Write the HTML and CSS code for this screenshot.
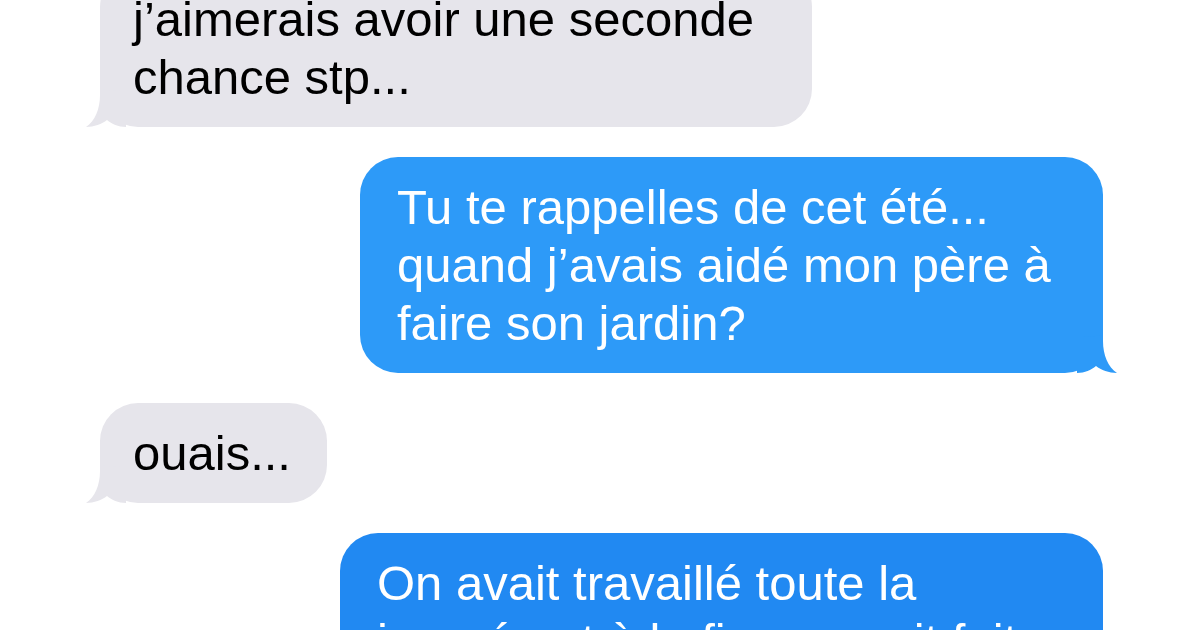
FILE: index.html
```html
<!DOCTYPE html>
<html lang="fr">
<head>
    <meta charset="UTF-8">
    <meta name="viewport" content="width=device-width, initial-scale=1.0">
    <title>Messages</title>
    <link rel="stylesheet" href="styles.css">
</head>
<body>
    <div class="chat">
        <!-- message recu -->
        <div class="bubble them first w-seconde">
            j’aimerais avoir une seconde<br>chance stp...
            <svg class="tail" viewBox="0 0 40 40"><path d="M0 4C14 4 26 2 26 2V8C26 22 31 34 40 40C32 40 24 37 19 33C14 37 8 40 0 40Z"/></svg>
        </div>
        <!-- message envoye -->
        <div class="bubble me top w-ete">
            Tu te rappelles de cet été...<br>quand j’avais aidé mon père à<br>faire son jardin?
            <svg class="tail" viewBox="0 0 40 40"><path d="M0 4C14 4 26 2 26 2V8C26 22 31 34 40 40C32 40 24 37 19 33C14 37 8 40 0 40Z"/></svg>
        </div>
        <div class="bubble them w-ouais">
            ouais...
            <svg class="tail" viewBox="0 0 40 40"><path d="M0 4C14 4 26 2 26 2V8C26 22 31 34 40 40C32 40 24 37 19 33C14 37 8 40 0 40Z"/></svg>
        </div>
        <div class="bubble me bottom w-journee">
            On avait travaillé toute la<br>journée et à la fin on avait fait
        </div>
    </div>
</body>
</html>
```

FILE: styles.css
```css
html,body{margin:0;padding:0;background:#fff;}
body{width:1200px;height:630px;overflow:hidden;font-family:"Liberation Sans",Arial,sans-serif;}
.chat{display:flex;flex-direction:column;gap:30px;}
.bubble{position:relative;box-sizing:border-box;font-size:49px;line-height:58px;padding:21px 0 21px 33px;border-radius:38px;white-space:nowrap;}
.bubble.first{margin-top:-31px;}
.them{align-self:flex-start;margin-left:100px;background:#e6e5eb;color:#000;}
.me{align-self:flex-end;margin-right:97px;padding-left:37px;color:#fff;}
.me.top{background:#2d9af8;}
.me.bottom{background:#2189f2;}
.tail{position:absolute;bottom:0;width:40px;height:40px;}
.me .tail{right:-14px;}
.me.top .tail path{fill:#2d9af8;}
.them .tail{left:-14px;transform:scaleX(-1);}
.them .tail path{fill:#e6e5eb;}
.w-seconde{width:712px;}
.w-ete{width:743px;}
.w-ouais{width:227px;}
.w-journee{width:763px;}
```
